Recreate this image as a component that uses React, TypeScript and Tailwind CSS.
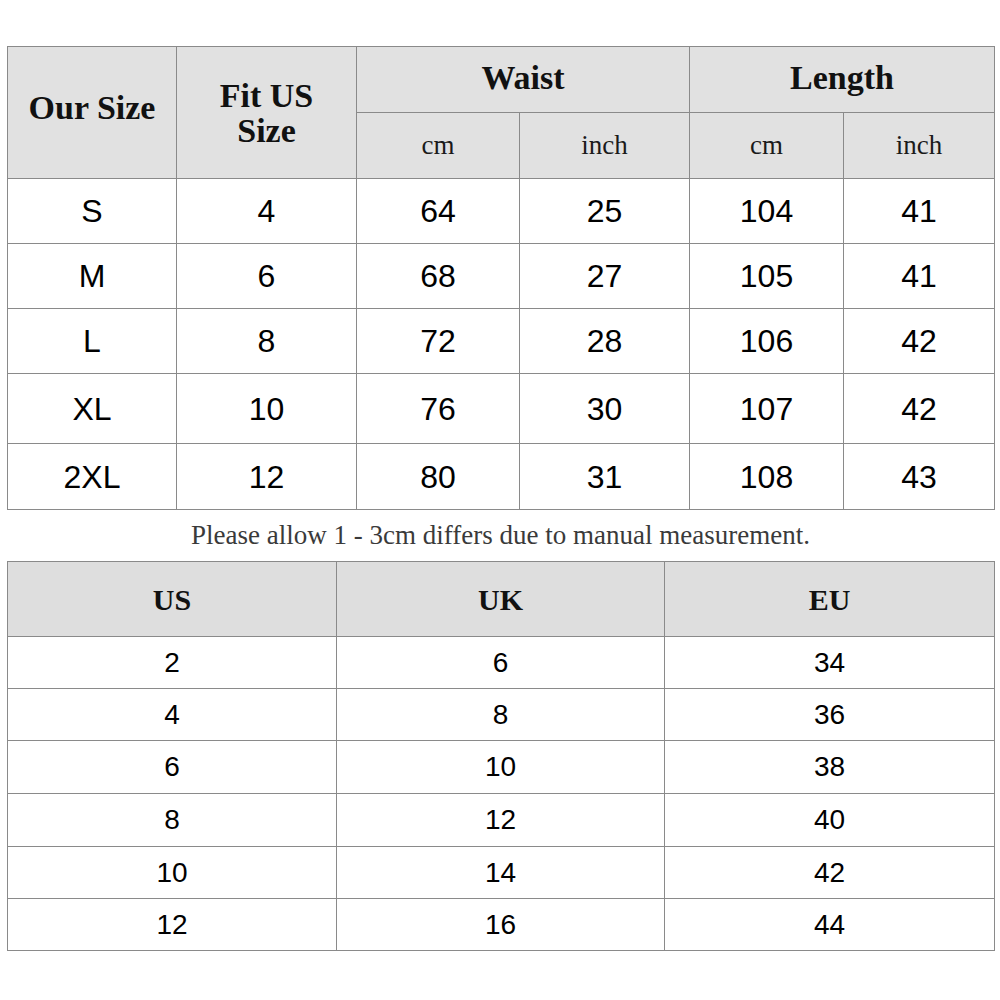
const sizes = [
  ["S", "4", "64", "25", "104", "41"],
  ["M", "6", "68", "27", "105", "41"],
  ["L", "8", "72", "28", "106", "42"],
  ["XL", "10", "76", "30", "107", "42"],
  ["2XL", "12", "80", "31", "108", "43"],
];
const rowHeights = ["h-[65px]", "h-[65px]", "h-[65px]", "h-[70px]", "h-[66px]"];

const conv = [
  ["2", "6", "34"],
  ["4", "8", "36"],
  ["6", "10", "38"],
  ["8", "12", "40"],
  ["10", "14", "42"],
  ["12", "16", "44"],
];
const convHeights = ["h-[52px]", "h-[52px]", "h-[53px]", "h-[53px]", "h-[52px]", "h-[52px]"];

const serif = "font-['Liberation_Serif',serif]";
const sans = "font-['Liberation_Sans',sans-serif]";
const cell = "border border-[#8a8a8a] p-0 text-center align-middle";

export default function App() {
  return (
    <div className="min-h-screen w-[1000px] bg-white pl-[7px] pt-[46px] text-[#111]">
      {/* size chart */}
      <table className="w-[987px] table-fixed border-collapse">
        <colgroup>
          <col className="w-[169px]" />
          <col className="w-[180px]" />
          <col className="w-[163px]" />
          <col className="w-[170px]" />
          <col className="w-[154px]" />
          <col className="w-[151px]" />
        </colgroup>
        <thead className={`bg-[#e1e1e1] ${serif}`}>
          <tr className="h-[66px]">
            <th rowSpan={2} className={`${cell} pb-[10px] text-[34px] font-bold`}>
              Our Size
            </th>
            <th rowSpan={2} className={`${cell} text-[34px] font-bold leading-[35px]`}>
              Fit US
              <br />
              Size
            </th>
            <th colSpan={2} className={`${cell} pb-[5px] text-[34px] font-bold`}>
              Waist
            </th>
            <th colSpan={2} className={`${cell} pb-[5px] text-[34px] font-bold`}>
              Length
            </th>
          </tr>
          <tr className="h-[66px]">
            <th className={`${cell} text-[27px] font-normal text-[#1a1a1a]`}>cm</th>
            <th className={`${cell} text-[27px] font-normal text-[#1a1a1a]`}>inch</th>
            <th className={`${cell} text-[27px] font-normal text-[#1a1a1a]`}>cm</th>
            <th className={`${cell} text-[27px] font-normal text-[#1a1a1a]`}>inch</th>
          </tr>
        </thead>
        <tbody className={`${sans} text-[32px] text-black`}>
          {sizes.map((r, i) => (
            <tr key={r[0]} className={rowHeights[i]}>
              {r.map((v, j) => (
                <td key={j} className={cell}>
                  {v}
                </td>
              ))}
            </tr>
          ))}
        </tbody>
      </table>

      <p className={`${serif} flex h-[51px] w-[987px] items-center justify-center text-[27px] text-[#3a3a3a]`}>
        Please allow 1 - 3cm differs due to manual measurement.
      </p>

      {/* conversion chart */}
      <table className="w-[987px] table-fixed border-collapse">
        <colgroup>
          <col className="w-[329px]" />
          <col className="w-[328px]" />
          <col className="w-[330px]" />
        </colgroup>
        <thead className={`bg-[#dedede] ${serif}`}>
          <tr className="h-[75px]">
            <th className={`${cell} text-[30px] font-bold`}>US</th>
            <th className={`${cell} text-[30px] font-bold`}>UK</th>
            <th className={`${cell} text-[30px] font-bold`}>EU</th>
          </tr>
        </thead>
        <tbody className={`${sans} text-[28px] text-black`}>
          {conv.map((r, i) => (
            <tr key={i} className={convHeights[i]}>
              {r.map((v, j) => (
                <td key={j} className={cell}>
                  {v}
                </td>
              ))}
            </tr>
          ))}
        </tbody>
      </table>
    </div>
  );
}
